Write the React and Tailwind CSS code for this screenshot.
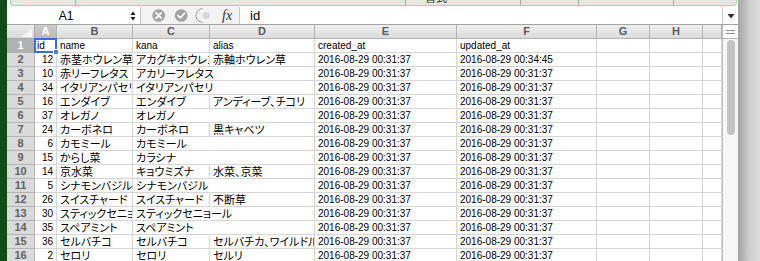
import React from 'react';

const cols = [
  { key: 'A', w: 'w-[22px]' },
  { key: 'B', w: 'w-[76px]' },
  { key: 'C', w: 'w-[77px]' },
  { key: 'D', w: 'w-[105px]' },
  { key: 'E', w: 'w-[142px]' },
  { key: 'F', w: 'w-[140px]' },
  { key: 'G', w: 'w-[53px]' },
  { key: 'H', w: 'w-[53px]' },
  { key: '', w: 'w-[19px]' },
];

const T = '2016-08-29 00:31:37';

// [id, name, kana, alias, created, updated]
const rows = [
  ['id', 'name', 'kana', 'alias', 'created_at', 'updated_at'],
  ['12', '赤茎ホウレン草', 'アカグキホウレンソウ', '赤軸ホウレン草', T, '2016-08-29 00:34:45'],
  ['10', '赤リーフレタス', 'アカリーフレタス', '', T, T],
  ['34', 'イタリアンパセリ', 'イタリアンパセリ', '', T, T],
  ['16', 'エンダイブ', 'エンダイブ', 'アンディーブ、チコリ', T, T],
  ['37', 'オレガノ', 'オレガノ', '', T, T],
  ['24', 'カーボネロ', 'カーボネロ', '黒キャベツ', T, T],
  ['6', 'カモミール', 'カモミール', '', T, T],
  ['15', 'からし菜', 'カラシナ', '', T, T],
  ['14', '京水菜', 'キョウミズナ', '水菜、京菜', T, T],
  ['5', 'シナモンバジル', 'シナモンバジル', '', T, T],
  ['26', 'スイスチャード', 'スイスチャード', '不断草', T, T],
  ['30', 'スティックセニョール', 'スティックセニョール', '', T, T],
  ['35', 'スペアミント', 'スペアミント', '', T, T],
  ['36', 'セルバチコ', 'セルバチコ', 'セルバチカ、ワイルドルッコラ', T, T],
  ['2', 'セロリ', 'セロリ', 'セルリ', T, T],
];

const isJa = (s) => /[^\x00-\x7f]/.test(s || '');

function Cell({ w, children, right, spill }) {
  const ja = isJa(children);
  return (
    <div
      className={`${w} h-[14px] shrink-0 border-r border-b border-[#d6d6d6] whitespace-nowrap px-[3px] leading-[13px] text-black ${
        ja
          ? "text-[11px] font-['Noto_Sans_CJK_JP',sans-serif] [font-feature-settings:'palt']"
          : "text-[10px] font-['Liberation_Sans',sans-serif]"
      } ${right ? 'text-right' : ''} ${spill ? 'relative z-10 overflow-visible border-r-white' : 'overflow-hidden'}`}
    >
      {children}
    </div>
  );
}

function Ribbon() {
  const segs = ['w-[65px]', 'w-[330px]', 'w-[115px]', 'w-[58px]', 'w-[95px]', 'w-[64px]'];
  return (
    <div className="h-[7px] bg-white pl-[3px] pr-[1px]">
      <div className="h-[6px] flex rounded-b-[4px] border border-t-0 border-[#a6d6a6] bg-[#e6e6e6] overflow-hidden">
        {segs.map((s, i) => (
          <div key={i} className={`${s} shrink-0 h-full border-r border-[#a9a9a9] last:border-r-0 overflow-hidden`}>
            {i === 2 && (
              <div className="pl-[19px] -mt-[8px] text-[11px] leading-[11px] text-[#333] font-['Noto_Sans_CJK_JP',sans-serif]">書式</div>
            )}
          </div>
        ))}
      </div>
    </div>
  );
}

function FormulaBar() {
  return (
    <div className="h-[18px] flex border-b border-[#a3a3a3] bg-white">
      <div className="w-[118px] shrink-0 flex items-center justify-center text-[12px] text-black font-['Liberation_Sans',sans-serif]">A1</div>
      <div className="w-[15px] shrink-0 flex items-center justify-center">
        <svg width="6" height="10" viewBox="0 0 6 10">
          <path d="M3 0.5 L5.5 4 L0.5 4 Z" fill="#222" />
          <path d="M3 9.5 L5.5 6 L0.5 6 Z" fill="#222" />
        </svg>
      </div>
      <div className="relative w-[100px] shrink-0 flex items-center border-l border-r border-[#c9c9c9] bg-[#f3f3f3]">
        <svg width="100" height="17" viewBox="0 0 100 17">
          <circle cx="18" cy="8.5" r="6.5" fill="#a3a3a3" />
          <path d="M15.3 5.8 L20.7 11.2 M20.7 5.8 L15.3 11.2" stroke="#fff" strokeWidth="1.8" strokeLinecap="round" />
          <circle cx="41" cy="8.5" r="6.5" fill="#a3a3a3" />
          <path d="M37.8 8.6 L40.2 11 L44.4 6.2" stroke="#fff" strokeWidth="1.8" fill="none" strokeLinecap="round" strokeLinejoin="round" />
          <path d="M63 1.5 A7 7 0 0 0 63 15.5" stroke="#9a9a9a" strokeWidth="1" fill="none" />
          <circle cx="66.5" cy="8.5" r="3.6" fill="#d6d6d6" />
        </svg>
        <span className="absolute left-[81px] top-0 text-[14px] leading-[17px] italic text-[#333] font-['Liberation_Serif',serif]">fx</span>
      </div>
      <div className="flex-1 flex items-center pl-[10px] text-[13px] text-black font-['Liberation_Sans',sans-serif]">id</div>
      <div className="w-[16px] shrink-0 border-l border-[#c9c9c9] flex items-center justify-center">
        <svg width="8" height="6" viewBox="0 0 8 6">
          <path d="M0.5 1 L7.5 1 L4 5.5 Z" fill="#333" />
        </svg>
      </div>
    </div>
  );
}

function HeaderRow() {
  return (
    <div className="flex h-[14px]">
      <div className="relative w-[28px] shrink-0 border-r border-b border-[#a9a9a9] bg-gradient-to-b from-[#ececec] to-[#d9d9d9]">
        <svg className="absolute right-[2px] bottom-[1px]" width="11" height="8" viewBox="0 0 11 8">
          <path d="M11 0 L11 8 L0 8 Z" fill="#f7f7f7" />
        </svg>
      </div>
      {cols.map((c, i) => (
        <div
          key={i}
          className={`${c.w} shrink-0 border-r border-b border-[#b3b3b3] text-center text-[11px] leading-[13px] font-bold font-['Liberation_Sans',sans-serif] ${
            i === 0
              ? 'bg-gradient-to-b from-[#cbcbcb] to-[#b9b9b9] text-white'
              : 'bg-gradient-to-b from-[#efefef] to-[#dcdcdc] text-[#5c5c5c]'
          }`}
        >
          {c.key}
        </div>
      ))}
    </div>
  );
}

function DataRow({ r, n }) {
  const [id, name, kana, alias, created, updated] = r;
  return (
    <div className="flex">
      <div
        className={`w-[28px] h-[14px] shrink-0 border-r border-b border-[#b5b5b5] text-center text-[11px] leading-[13px] font-bold font-['Liberation_Sans',sans-serif] ${
          n === 1 ? 'bg-[#b1b1b1] text-white' : 'bg-[#dadada] text-[#626262]'
        }`}
      >
        {n}
      </div>
      {n === 1 ? (
        <div className="relative w-[22px] h-[14px] shrink-0 border-r border-b border-[#d6d6d6] px-[2px] text-[10px] leading-[13px] font-['Liberation_Sans',sans-serif]">
          id
          <div className="absolute -left-[1px] -top-[1px] w-[23px] h-[15px] border-2 border-[#3a6fd8]" />
          <div className="absolute -right-[3px] -bottom-[3px] w-[6px] h-[6px] bg-[#4b82dc] border border-white" />
        </div>
      ) : (
        <Cell w="w-[22px]" right>{id}</Cell>
      )}
      <Cell w="w-[76px]">{name}</Cell>
      <Cell w="w-[77px]" spill={!alias}>{kana}</Cell>
      <Cell w="w-[105px]">{alias}</Cell>
      <Cell w="w-[142px]">{created}</Cell>
      <Cell w="w-[140px]">{updated}</Cell>
      <Cell w="w-[53px]" />
      <Cell w="w-[53px]" />
      <Cell w="w-[19px]" />
    </div>
  );
}

function ScrollColumn() {
  return (
    <div className="w-[16px] shrink-0 flex flex-col border-l border-[#bdbdbd] bg-[#f7f7f7]">
      <div className="h-[14px] shrink-0 border-b border-[#b3b3b3] bg-white flex flex-col items-center justify-center gap-[2px]">
        <div className="w-[9px] h-px bg-[#8a8a8a]" />
        <div className="w-[9px] h-px bg-[#8a8a8a]" />
      </div>
      <div className="pt-[1px] pl-[4px]">
        <div className="w-[8px] h-[95px] rounded-full bg-[#c3c3c3]" />
      </div>
    </div>
  );
}

export default function App() {
  return (
    <div className="w-[760px] h-[261px] flex overflow-hidden bg-white">
      <div className="w-[7px] shrink-0 bg-[#124c15]" />
      <div className="w-[731px] shrink-0 flex flex-col">
        <Ribbon />
        <FormulaBar />
        <div className="flex flex-1 overflow-hidden">
          <div className="w-[715px] shrink-0">
            <HeaderRow />
            {rows.map((r, i) => (
              <DataRow key={i} r={r} n={i + 1} />
            ))}
          </div>
          <ScrollColumn />
        </div>
      </div>
      <div className="w-[22px] shrink-0 bg-gradient-to-r from-[#a4a4a4] via-[#cdcdcd] to-[#dddddd]" />
    </div>
  );
}
